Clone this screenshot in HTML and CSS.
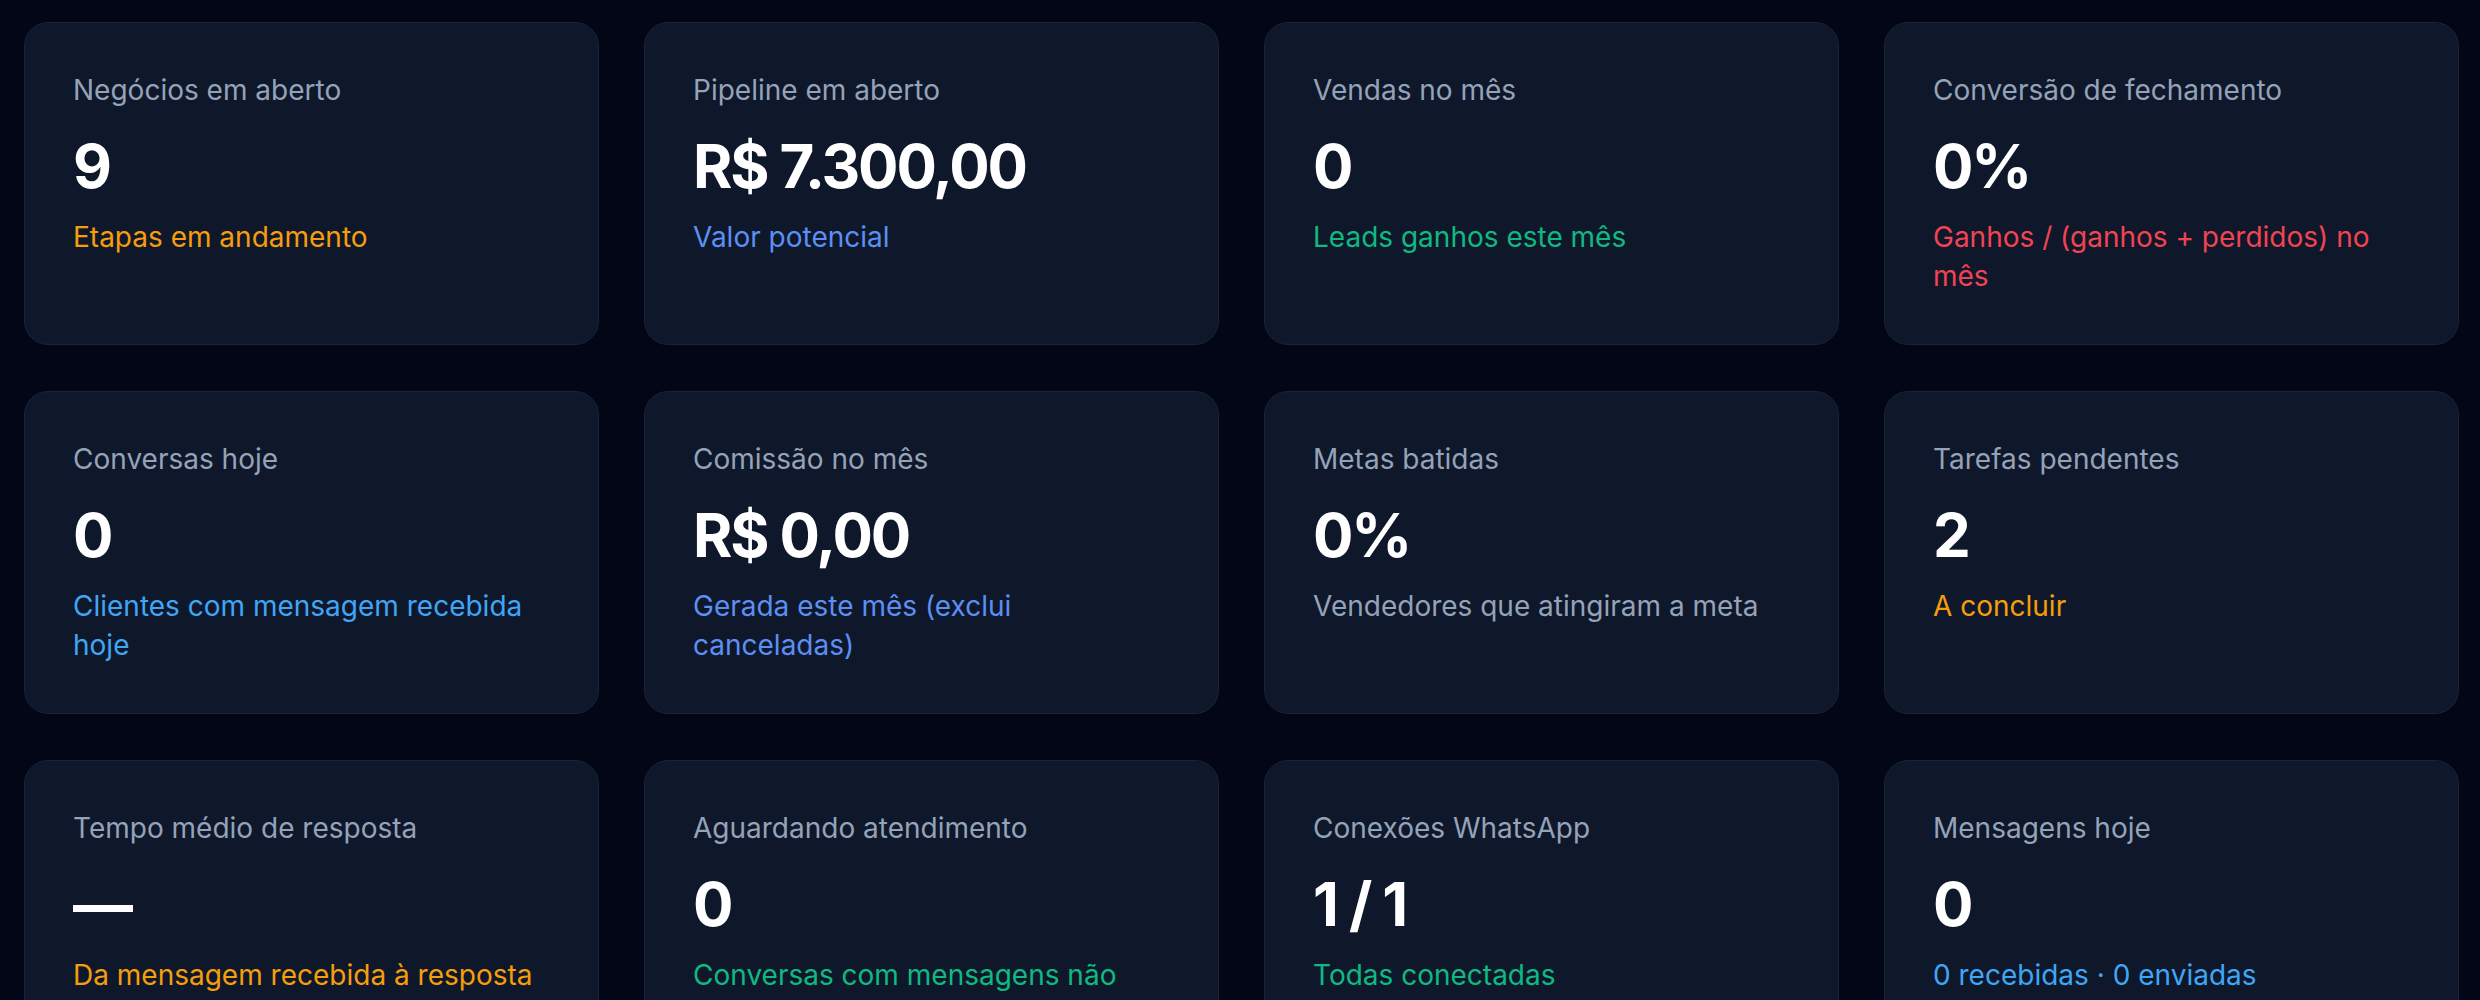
FILE: index.html
```html
<!DOCTYPE html>
<html lang="pt-BR">
  <head>
    <meta charset="UTF-8" />
    <meta name="viewport" content="width=device-width, initial-scale=1.0" />
    <title>Painel</title>
    <link rel="stylesheet" href="styles.css">
  </head>
  <body>
    <div class="stats-grid">
      <div class="stat-card">
        <p class="stat-label">Negócios em aberto</p>
        <p class="stat-value">9</p>
        <p class="stat-sub amber">Etapas em andamento</p>
      </div>
      <div class="stat-card">
        <p class="stat-label">Pipeline em aberto</p>
        <p class="stat-value">R$ 7.300,00</p>
        <p class="stat-sub blue">Valor potencial</p>
      </div>
      <div class="stat-card">
        <p class="stat-label">Vendas no mês</p>
        <p class="stat-value">0</p>
        <p class="stat-sub green">Leads ganhos este mês</p>
      </div>
      <div class="stat-card">
        <p class="stat-label">Conversão de fechamento</p>
        <p class="stat-value">0%</p>
        <p class="stat-sub red">Ganhos / (ganhos + perdidos) no mês</p>
      </div>

      <div class="stat-card">
        <p class="stat-label">Conversas hoje</p>
        <p class="stat-value">0</p>
        <p class="stat-sub sky">Clientes com mensagem recebida hoje</p>
      </div>
      <div class="stat-card">
        <p class="stat-label">Comissão no mês</p>
        <p class="stat-value">R$ 0,00</p>
        <p class="stat-sub blue">Gerada este mês (exclui canceladas)</p>
      </div>
      <div class="stat-card">
        <p class="stat-label">Metas batidas</p>
        <p class="stat-value">0%</p>
        <p class="stat-sub muted">Vendedores que atingiram a meta</p>
      </div>
      <div class="stat-card">
        <p class="stat-label">Tarefas pendentes</p>
        <p class="stat-value">2</p>
        <p class="stat-sub amber">A concluir</p>
      </div>

      <div class="stat-card">
        <p class="stat-label">Tempo médio de resposta</p>
        <p class="stat-value">—</p>
        <p class="stat-sub amber">Da mensagem recebida à resposta (hoje)</p>
      </div>
      <div class="stat-card">
        <p class="stat-label">Aguardando atendimento</p>
        <p class="stat-value">0</p>
        <p class="stat-sub green">Conversas com mensagens não respondidas</p>
      </div>
      <div class="stat-card">
        <p class="stat-label">Conexões WhatsApp</p>
        <p class="stat-value">1 / 1</p>
        <p class="stat-sub green">Todas conectadas</p>
      </div>
      <div class="stat-card">
        <p class="stat-label">Mensagens hoje</p>
        <p class="stat-value">0</p>
        <p class="stat-sub sky">0 recebidas · 0 enviadas</p>
      </div>
    </div>
  </body>
</html>
```

FILE: styles.css
```css
/* Estilos gerais */
body {
  font-family: Inter, "Noto Sans", sans-serif;
  margin: 0;
  padding: 0;
  background-color: #020617;
  overflow: hidden;
}

/* Grade de indicadores */
.stats-grid {
  display: grid;
  grid-template-columns: repeat(4, 1fr);
  gap: 46px 45px;
  padding: 22px 21px 0 24px;
}

/* Cartão */
.stat-card {
  background-color: #0f172a;
  border: 1px solid #1a2436;
  border-radius: 24px;
  padding: 48px;
}

.stat-card p {
  margin: 0;
}

.stat-label {
  color: #94a3b8;
  font-size: 28px;
  line-height: 39px;
}

.stat-value {
  color: #fff;
  font-size: 60px;
  font-weight: 700;
  line-height: 72px;
  letter-spacing: -0.035em;
  margin-top: 20px !important;
}

.stat-sub {
  font-size: 28px;
  line-height: 39px;
  margin-top: 16px !important;
}

/* Cores dos textos auxiliares */
.amber { color: #f59e0b; }
.blue { color: #5c8ff2; }
.sky { color: #3fa6f5; }
.green { color: #10b981; }
.red { color: #f04452; }
.muted { color: #94a3b8; }
```
